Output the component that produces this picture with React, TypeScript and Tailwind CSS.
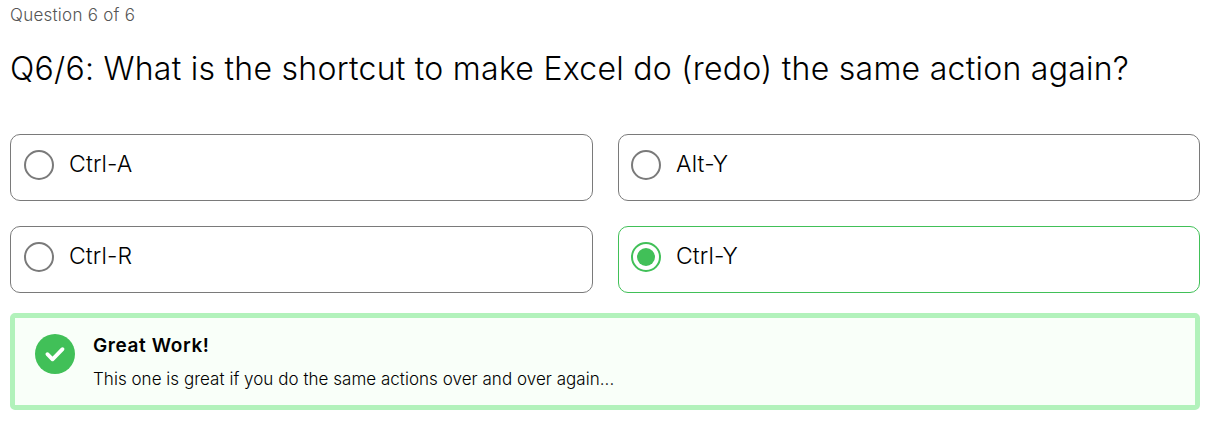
import { useState } from "react";

const answers = [
  { label: "Ctrl-A", tracking: "tracking-[0.15px]", inset: "pl-[13px]" },
  { label: "Alt-Y", tracking: "tracking-[0.15px]", inset: "pl-3" },
  { label: "Ctrl-R", tracking: "tracking-[0.1px]", inset: "pl-[13px]" },
  { label: "Ctrl-Y", tracking: "tracking-[0.1px]", inset: "pl-3" },
];

type OptionProps = {
  label: string;
  tracking: string;
  inset: string;
  selected: boolean;
  onSelect: () => void;
};

function Option({ label, tracking, inset, selected, onSelect }: OptionProps) {
  return (
    <button
      type="button"
      role="radio"
      aria-checked={selected}
      onClick={onSelect}
      className={`flex h-[67px] items-start rounded-[10px] border pt-[15px] text-left ${inset} ${
        selected ? "border-[#41c058]" : "border-[#7a7a7a]"
      }`}
    >
      <span
        className={`flex size-[30px] shrink-0 items-center justify-center rounded-full border-2 ${
          selected ? "border-[#41c058]" : "border-[#7a7a7a]"
        }`}
      >
        {selected && <span className="size-[18px] rounded-full bg-[#41c058]" />}
      </span>
      <span className={`ml-[15px] text-[23px] leading-7 font-light whitespace-nowrap ${tracking}`}>
        {label}
      </span>
    </button>
  );
}

export default function App() {
  const [choice, setChoice] = useState(3);

  return (
    <main className="h-[423px] bg-white pr-[14px] pl-[10px] font-['Inter',sans-serif] text-black">
      <p className="pt-1 text-[17px] leading-[22px] font-light tracking-[0.25px] whitespace-nowrap text-[#555555]">
        Question 6 of 6
      </p>
      <h1 className="mt-[23px] text-[32px] leading-10 font-light tracking-[0.265px] whitespace-nowrap">
        Q6/6: What is the shortcut to make Excel do (redo) the same action again?
      </h1>
      <div role="radiogroup" className="mt-[45px] grid grid-cols-[583px_582px] gap-[25px]">
        {answers.map((answer, index) => (
          <Option
            key={answer.label}
            {...answer}
            selected={choice === index}
            onSelect={() => setChoice(index)}
          />
        ))}
      </div>
      <section className="mt-5 flex h-[97px] rounded-[5px] border-5 border-[#b2f2bb] bg-[#f9fff9] pt-4 pl-5">
        <svg viewBox="0 0 40 40" className="size-10 shrink-0" aria-hidden="true">
          <circle cx="20" cy="20" r="20" fill="#41c058" />
          <path
            d="M12.4 20.2L17.5 25.3L27.5 15.2"
            fill="none"
            stroke="white"
            strokeWidth="3.8"
            strokeLinecap="round"
            strokeLinejoin="round"
          />
        </svg>
        <div className="ml-[18px]">
          <h2 className="text-[19px] leading-6 font-semibold tracking-[0.6px] whitespace-nowrap">Great Work!</h2>
          <p className="mt-[9px] text-[17px] leading-6 font-light tracking-[0.03px] whitespace-nowrap">
            This one is great if you do the same actions over and over again...
          </p>
        </div>
      </section>
    </main>
  );
}
